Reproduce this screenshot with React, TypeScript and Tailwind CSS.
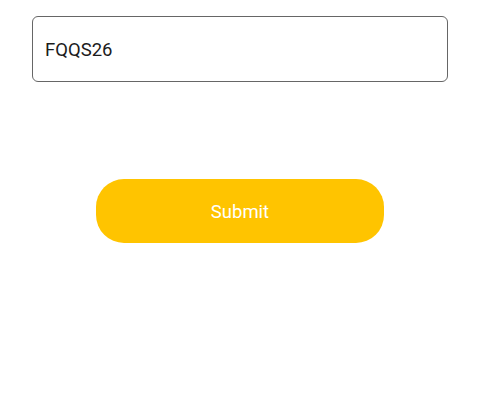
export default function App() {
  return (
    <div className="w-[480px] h-[410px] bg-white px-8 pt-4 font-['Roboto',sans-serif]">
      <div className="h-[66px] rounded-md border-[1.5px] border-[#666666] flex items-center px-3 pt-[3px]">
        <span className="text-[18.5px] text-[#1c1c1c]">FQQS26</span>
      </div>
      <div className="flex justify-center mt-[97px]">
        <button className="w-[288px] h-[64px] rounded-[28px] bg-[#ffc400] text-white text-[18.5px] pt-[4px]">
          Submit
        </button>
      </div>
    </div>
  );
}
